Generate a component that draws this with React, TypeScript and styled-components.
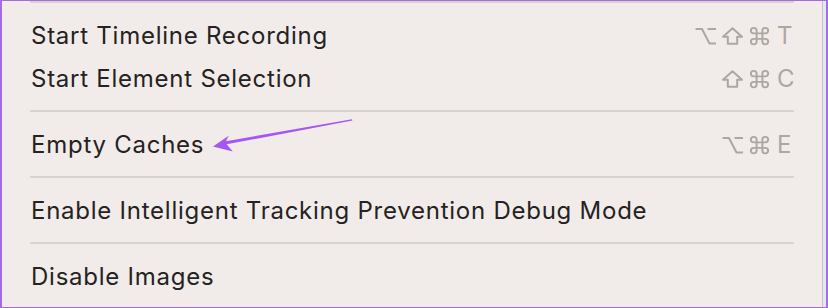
import React from "react";
import styled, { createGlobalStyle } from "styled-components";

const GlobalStyle = createGlobalStyle`
  html, body { margin: 0; padding: 0; background: #f1ece9; }
  * { box-sizing: border-box; }
`;

const Frame = styled.div`
  position: relative;
  width: 828px;
  height: 308px;
  display: flex;
  border-top: 1px solid #a86ae2;
  border-left: 2px solid #a86ae2;
  border-right: 2px solid #a86ae2;
  border-bottom: 1px solid #a86ae2;
  background: #f1ece9;
  overflow: hidden;
`;

const Panel = styled.div`
  flex: 1;
  display: flex;
  flex-direction: column;
  border-right: 1px solid #c4c4c8;
  font-family: Inter, "Liberation Sans", sans-serif;
`;

const EdgeStrip = styled.div`
  width: 3px;
  background: #e6e8ef;
`;

const Rule = styled.div<{ $top?: boolean }>`
  flex: none;
  padding: ${(p) => (p.$top ? "0 28px 11px" : "10px 28px 11px")};
  &::before {
    content: "";
    display: block;
    height: 2px;
    background: #d8d3cf;
  }
`;

const Item = styled.div`
  flex: none;
  height: 43px;
  display: flex;
  align-items: center;
  justify-content: space-between;
  padding: 0 28px 0 29px;
  font-size: 24px;
  line-height: 43px;
  letter-spacing: 0.75px;
  color: #252222;
`;

const Label = styled.span`
  white-space: nowrap;
`;

const Keys = styled.span`
  display: flex;
  align-items: center;
  gap: 6px;
  color: #aca7a2;
`;

const Mod = styled.svg`
  display: block;
  width: 21px;
  height: 18px;
  overflow: visible;
  fill: none;
  stroke: #aca7a2;
  stroke-width: 2;
  stroke-linejoin: round;
  stroke-linecap: butt;
`;

const Letter = styled.span`
  width: 17px;
  margin-left: 1px;
  font-size: 24px;
  letter-spacing: 0;
`;

const Arrow = styled.svg`
  position: absolute;
  left: 0;
  top: 0;
  pointer-events: none;
`;

type ModKey = "opt" | "shift" | "cmd";

const ModIcon: React.FC<{ k: ModKey }> = ({ k }) => {
  if (k === "opt")
    return (
      <Mod viewBox="0 0 21 18">
        <path d="M0.5 2 H7 L14.5 16.5 H21" />
        <path d="M12.5 2 H21" />
      </Mod>
    );
  if (k === "shift")
    return (
      <Mod viewBox="0 0 21 18">
        <path d="M10.5 1.2 L20 9.8 H15.2 V16.8 H5.8 V9.8 H1 Z" />
      </Mod>
    );
  return (
    <Mod viewBox="0 0 21 18">
      <path
        transform="translate(0.9 -0.1) scale(0.96 0.92)"
        d="M7 7 V4 A3 3 0 1 0 4 7 H16 A3 3 0 1 0 13 4 V16 A3 3 0 1 0 16 13 H4 A3 3 0 1 0 7 16 Z"
      />
    </Mod>
  );
};

type Row = { label: string; keys?: ModKey[]; letter?: string };

const Shortcut: React.FC<{ keys?: ModKey[]; letter?: string }> = ({ keys, letter }) =>
  letter ? (
    <Keys>
      {keys?.map((k) => (
        <ModIcon key={k} k={k} />
      ))}
      <Letter>{letter}</Letter>
    </Keys>
  ) : null;

const groups: Row[][] = [
  [
    { label: "Start Timeline Recording", keys: ["opt", "shift", "cmd"], letter: "T" },
    { label: "Start Element Selection", keys: ["shift", "cmd"], letter: "C" },
  ],
  [{ label: "Empty Caches", keys: ["opt", "cmd"], letter: "E" }],
  [{ label: "Enable Intelligent Tracking Prevention Debug Mode" }],
  [{ label: "Disable Images" }],
];

export default function App() {
  return (
    <>
      <GlobalStyle />
      <Frame>
        <Panel>
          <Rule $top />
          {groups.map((g, gi) => (
            <React.Fragment key={gi}>
              {gi > 0 && <Rule />}
              {g.map((r) => (
                <Item key={r.label}>
                  <Label>{r.label}</Label>
                  <Shortcut keys={r.keys} letter={r.letter} />
                </Item>
              ))}
            </React.Fragment>
          ))}
        </Panel>
        <EdgeStrip />
        <Arrow width="828" height="308" viewBox="0 0 828 308">
          <path d="M350 118.2 L350.4 119.6 L222 143.8 L221 140.8 Z" fill="#a457f2" />
          <path
            d="M211 145.4 L227 134.6 Q223.3 140 224.3 142.6 Q226 145.2 230.8 150.4 Z"
            fill="#a457f2"
          />
        </Arrow>
      </Frame>
    </>
  );
}
